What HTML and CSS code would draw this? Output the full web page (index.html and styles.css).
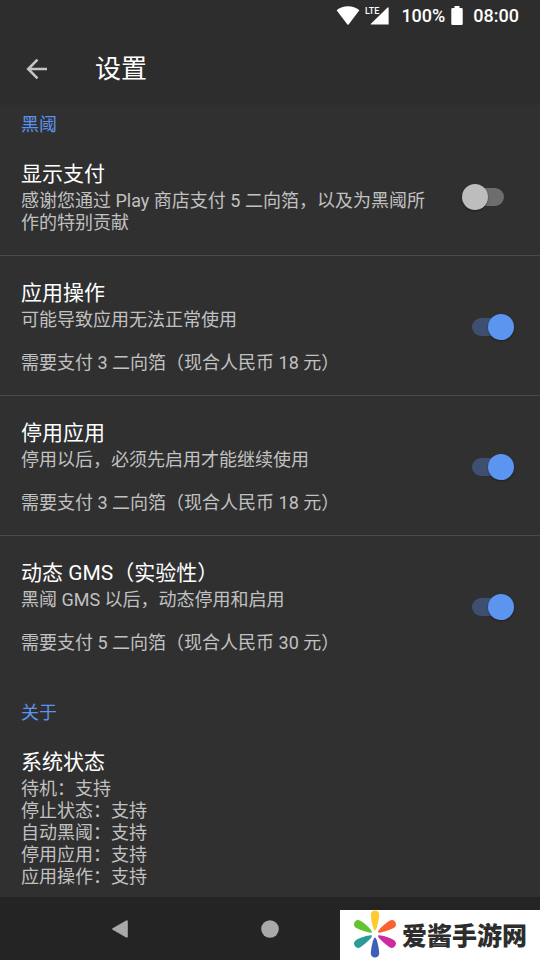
FILE: index.html
```html
<!DOCTYPE html>
<html lang="zh-CN">
<head>
<meta charset="utf-8">
<meta name="viewport" content="width=device-width, initial-scale=1">
<title>设置</title>
<link rel="stylesheet" href="styles.css">
</head>
<body>
<div class="app">
  <header class="top">
    <div class="status">
      <svg class="wifi" width="24" height="20" viewBox="0 0 24 20" aria-hidden="true"><path d="M.6 4.3C7-1.2 17-1.2 23.4 4.3L12.6 18.5Q12 19.2 11.4 18.5Z"/></svg>
      <svg class="signal" width="24" height="20" viewBox="0 0 24 20" aria-hidden="true"><path d="M23.6 2.2V18.6H6.2Q5.2 18.6 5.9 17.8L22.6 1.4Q23.6 .8 23.6 2.2Z"/><text x="0" y="8">LTE</text></svg>
      <span class="percent">100%</span>
      <svg class="battery" width="12" height="20" viewBox="0 0 12 20" aria-hidden="true"><path d="M3.5 0H8.5V2H10.5Q11.7 2 11.7 3.2V17.8Q11.7 19 10.5 19H1.5Q.3 19 .3 17.8V3.2Q.3 2 1.5 2H3.5Z"/></svg>
      <time>08:00</time>
    </div>
    <div class="toolbar">
      <button class="back" type="button" aria-label="返回"><svg width="22" height="22" viewBox="0 0 22 22" aria-hidden="true"><path d="M21 11H2.5M11.5 1.7L2.2 11L11.5 20.3"/></svg></button>
      <h1>设置</h1>
    </div>
  </header>

  <main class="content">
    <section class="group">
      <h2>黑阈</h2>
      <div class="row row-inset">
        <div class="text">
          <label class="name" for="show-pay">显示支付</label>
          <p>感谢您通过 Play 商店支付 5 二向箔，以及为黑阈所作的特别贡献</p>
        </div>
        <input class="switch" type="checkbox" id="show-pay">
      </div>
      <div class="row">
        <div class="text">
          <label class="name" for="app-ops">应用操作</label>
          <p>可能导致应用无法正常使用</p>
          <p class="price">需要支付 3 二向箔（现合人民币 18 元）</p>
        </div>
        <input class="switch" type="checkbox" id="app-ops" checked>
      </div>
      <div class="row">
        <div class="text">
          <label class="name" for="disable-app">停用应用</label>
          <p>停用以后，必须先启用才能继续使用</p>
          <p class="price">需要支付 3 二向箔（现合人民币 18 元）</p>
        </div>
        <input class="switch" type="checkbox" id="disable-app" checked>
      </div>
      <div class="row">
        <div class="text">
          <label class="name" for="gms">动态 GMS（实验性）</label>
          <p>黑阈 GMS 以后，动态停用和启用</p>
          <p class="price">需要支付 5 二向箔（现合人民币 30 元）</p>
        </div>
        <input class="switch" type="checkbox" id="gms" checked>
      </div>
    </section>
    <section class="group">
      <h2>关于</h2>
      <div class="row">
        <div class="text">
          <h3 class="name">系统状态</h3>
          <ul>
            <li>待机：支持</li>
            <li>停止状态：支持</li>
            <li>自动黑阈：支持</li>
            <li>停用应用：支持</li>
            <li>应用操作：支持</li>
          </ul>
        </div>
      </div>
    </section>
  </main>

  <nav class="nav">
    <button type="button" aria-label="后退"><svg width="18" height="18" viewBox="0 0 18 18" aria-hidden="true"><path d="M1.6 8.2L15.2.5Q16.8-.1 16.8 1.4V16.6Q16.8 18.1 15.2 17.5L1.6 9.8Q.6 9 1.6 8.2Z"/></svg></button>
    <button type="button" aria-label="主屏幕"><svg width="18" height="18" viewBox="0 0 18 18" aria-hidden="true"><circle cx="9" cy="9" r="8.8"/></svg></button>
  </nav>

  <div class="brand">
    <svg width="44" height="48" viewBox="0 0 44 48" aria-hidden="true">
      <defs><path id="petal" d="M22 20.5C20 20.5 17.8 8 17.8 4.8C17.8-1 26.2-1 26.2 4.8C26.2 8 24 20.5 22 20.5Z"/></defs>
      <use href="#petal" fill="#fdcb2e"/>
      <use href="#petal" fill="#f96332" transform="rotate(60 22 24)"/>
      <use href="#petal" fill="#cf2ba0" transform="rotate(120 22 24)"/>
      <use href="#petal" fill="#3d5fb5" transform="rotate(180 22 24)"/>
      <use href="#petal" fill="#2b9a98" transform="rotate(240 22 24)"/>
      <use href="#petal" fill="#62c52e" transform="rotate(300 22 24)"/>
    </svg>
    <span>爱酱手游网</span>
  </div>
</div>
</body>
</html>
```

FILE: styles.css
```css
* {
  box-sizing: border-box;
  margin: 0;
  padding: 0;
}

body {
  background: #303030;
  color: #fff;
  font-family: Roboto, "Noto Sans CJK SC", sans-serif;
  font-size: 18px;
  line-height: 22px;
}

button {
  display: grid;
  place-items: center;
  border: 0;
  background: none;
}

svg {
  display: block;
  flex: none;
}

.app {
  position: relative;
  display: flex;
  flex-direction: column;
  height: 100vh;
}

.top {
  flex: none;
  background: #2d2d2d;
}

/* System status bar */
.status {
  display: flex;
  justify-content: flex-end;
  align-items: center;
  height: 32px;
  padding-right: 21px;
  fill: #fff;
  font-weight: 500;
}

.signal {
  margin-left: 5px;
}

.signal text {
  font: 500 9px Roboto, sans-serif;
}

.percent {
  margin-left: 12px;
}

.battery {
  margin: 0 10px 0 6px;
}

.toolbar {
  display: flex;
  align-items: center;
  height: 73px;
  padding-left: 16px;
  gap: 37px;
}

.back {
  width: 42px;
  height: 42px;
}

.back path {
  fill: none;
  stroke: #c4c4c4;
  stroke-width: 2.6;
}

h1 {
  font-size: 26px;
  font-weight: 400;
  line-height: 34px;
}

/* Preference list */
.content {
  flex: 1;
  min-height: 0;
  padding-top: 9px;
  overflow-y: auto;
  scrollbar-width: none;
}

.group + .group {
  padding-top: 27px;
}

h2 {
  padding: 0 21px 1px;
  color: #5c93ee;
  font-size: 18px;
  font-weight: 400;
}

.row {
  display: flex;
  align-items: center;
  gap: 22px;
  padding: 23px 26px 21px 21px;
}

.row-inset {
  padding-right: 36px;
}

.row + .row {
  border-top: 1px solid #4b4b4b;
}

.text {
  flex: 1;
  color: #c1c1c1;
}

.name {
  display: block;
  margin-bottom: 2px;
  color: #fff;
  font-size: 21px;
  font-weight: 400;
  line-height: 28px;
}

.price {
  margin-top: 21px;
}

ul {
  list-style: none;
}

.switch {
  appearance: none;
  display: grid;
  flex: none;
  align-items: center;
  width: 42px;
  height: 26px;
}

.switch::before,
.switch::after {
  content: "";
  grid-area: 1 / 1;
}

.switch::before {
  justify-self: end;
  width: 37px;
  height: 18px;
  border-radius: 9px;
  background: #6d6d6d;
}

.switch::after {
  width: 26px;
  height: 26px;
  border-radius: 50%;
  background: #bdbdbd;
  box-shadow: 0 1px 2px #0006;
}

.switch:checked::before {
  justify-self: start;
  background: #3e4f70;
}

.switch:checked::after {
  justify-self: end;
  background: #5c95f0;
}

/* System navigation */
.nav {
  display: grid;
  flex: none;
  grid-template-columns: repeat(3, 1fr);
  height: 63px;
  padding: 0 45px;
  background: #242424;
  fill: #a9a9a9;
}

.brand {
  position: absolute;
  right: 0;
  bottom: 0;
  display: flex;
  align-items: center;
  gap: 5px;
  height: 50px;
  padding: 0 13px 2px;
  background: #fff;
  color: #2d2d2d;
  font-family: "Noto Sans CJK SC", sans-serif;
  font-size: 25px;
  font-weight: 900;
}
```
